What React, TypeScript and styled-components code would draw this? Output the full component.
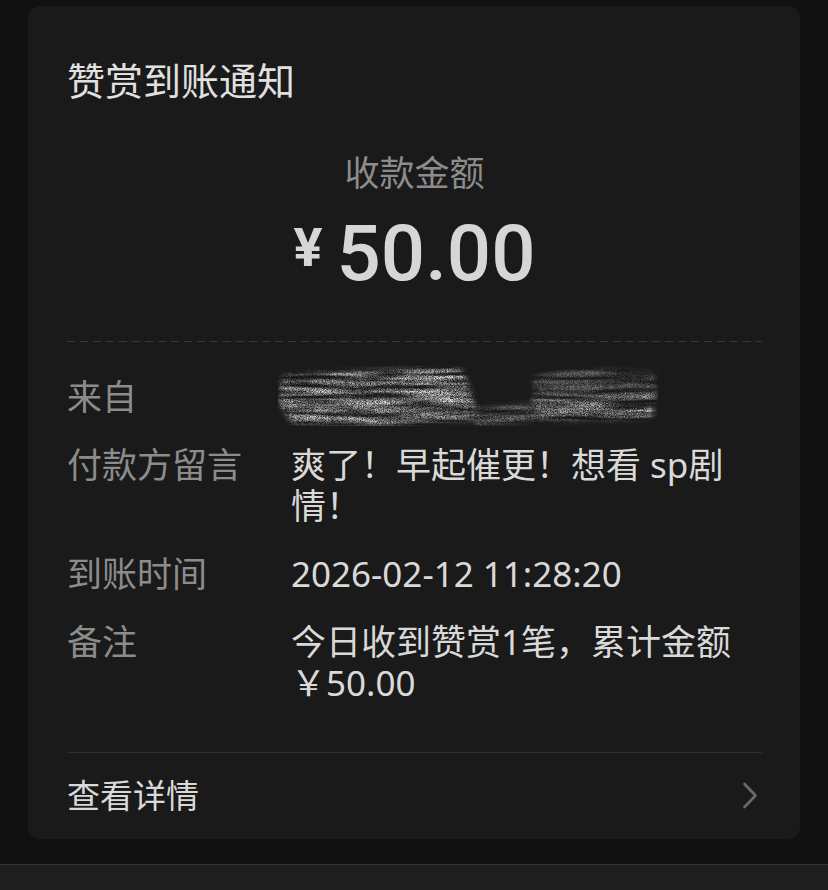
import React from 'react'
import styled, { createGlobalStyle } from 'styled-components'

const PAGE_BG = '#111111'
const CARD_BG = '#1a1a1a'
const TEXT = '#d9d9d9'
const MUTED = '#8c8c8c'
const FONT = `"Noto Sans", "Noto Sans CJK SC", sans-serif`

const GlobalStyle = createGlobalStyle`
  html, body {
    margin: 0;
    padding: 0;
    background: ${PAGE_BG};
    font-family: ${FONT};
  }
`

interface Row {
  label: string
  value?: string
  hidden?: boolean
}

const rows: Row[] = [
  { label: '来自', hidden: true },
  { label: '付款方留言', value: '爽了！早起催更！想看 sp剧情！' },
  { label: '到账时间', value: '2026-02-12 11:28:20' },
  { label: '备注', value: '今日收到赞赏1笔，累计金额￥50.00' },
]

// scribbled-out sender name
const Redaction = () => (
  <RedactionSvg width="392" height="74" viewBox="0 0 392 74">
    <defs>
      <filter id="grain" x="0" y="0" width="100%" height="100%">
        <feGaussianBlur in="SourceGraphic" stdDeviation="2.5" result="shape" />
        <feTurbulence type="fractalNoise" baseFrequency="0.015 0.22" numOctaves="2" seed="4" result="streak" />
        <feTurbulence type="fractalNoise" baseFrequency="1.4" numOctaves="1" seed="9" result="speck" />
        <feComposite in="streak" in2="speck" operator="arithmetic" k1="2.2" k2="0" k3="0" k4="0" result="mix" />
        <feColorMatrix
          in="mix"
          type="matrix"
          values="0 0 0 0 0.75  0 0 0 0 0.75  0 0 0 0 0.75  2.6 0 0 0 -0.35"
          result="tex"
        />
        <feComposite in="tex" in2="shape" operator="in" />
      </filter>
    </defs>
    <g filter="url(#grain)">
      <path d="M10 16 L188 8 L200 34 L206 62 L120 68 L20 66 L6 44 Z" fill="#fff" />
      <path d="M50 20 L180 16 L184 56 L60 60 Z" fill="#fff" />
      <path d="M200 50 L258 46 L262 64 L204 68 Z" fill="#fff" opacity="0.6" />
      <path d="M262 18 L320 10 L382 14 L386 38 L378 60 L300 64 L258 60 Z" fill="#fff" opacity="0.5" />
      <path d="M262 44 L380 38 L382 60 L266 62 Z" fill="#fff" />
    </g>
  </RedactionSvg>
)

const Chevron = () => (
  <svg width="16" height="27" viewBox="0 0 16 27">
    <polyline
      points="2.5,2 13.5,13.5 2.5,25"
      fill="none"
      stroke="#6a6a6a"
      strokeWidth="2.6"
      strokeLinecap="round"
      strokeLinejoin="round"
    />
  </svg>
)

export default function App() {
  return (
    <Page>
      <GlobalStyle />
      <Card>
        <Title>赞赏到账通知</Title>
        <AmountLabel>收款金额</AmountLabel>
        <Amount>
          <Yen>¥</Yen>
          <Digits>50.00</Digits>
        </Amount>
        <DashedRule />
        <Rows>
          {rows.map((r) => (
            <InfoRow key={r.label}>
              <Label>{r.label}</Label>
              <Value>{r.hidden ? <Redaction /> : r.value}</Value>
            </InfoRow>
          ))}
        </Rows>
        <SolidRule />
        <DetailLink>
          <span>查看详情</span>
          <Chevron />
        </DetailLink>
      </Card>
      <BottomBar />
    </Page>
  )
}

const Page = styled.div`
  min-height: 100vh;
  display: flex;
  flex-direction: column;
`

const Card = styled.div`
  margin: 6px 28px 0;
  padding: 52px 38px 0 39px;
  background: ${CARD_BG};
  border-radius: 12px;
  display: flex;
  flex-direction: column;
`

const Title = styled.div`
  font-size: 38px;
  line-height: 44px;
  color: #e0e0e0;
`

const AmountLabel = styled.div`
  margin-top: 51px;
  text-align: center;
  font-size: 35px;
  line-height: 40px;
  color: ${MUTED};
`

const Amount = styled.div`
  margin-top: 16px;
  height: 90px;
  display: flex;
  justify-content: center;
  align-items: center;
  gap: 14px;
  color: #d6d6d6;
  font-family: Roboto, "Noto Sans", sans-serif;
  font-weight: 500;
`

const Yen = styled.span`
  font-size: 54px;
  font-weight: 700;
  margin-top: -14px;
`

const Digits = styled.span`
  font-size: 78px;
  line-height: 90px;
`

const DashedRule = styled.div`
  margin-top: 42px;
  height: 1px;
  background: repeating-linear-gradient(
    90deg,
    #3a3a3a 0 8px,
    transparent 8px 13px
  );
`

const Rows = styled.div`
  margin-top: 34px;
  display: flex;
  flex-direction: column;
  gap: 27px;
`

const InfoRow = styled.div`
  display: grid;
  grid-template-columns: 224px 1fr;
  font-size: 35px;
  line-height: 41px;
`

const Label = styled.div`
  color: ${MUTED};
`

const Value = styled.div`
  color: ${TEXT};
  position: relative;
  min-height: 41px;
`

const RedactionSvg = styled.svg`
  position: absolute;
  left: -19px;
  top: -18px;
`

const SolidRule = styled.div`
  margin-top: 49px;
  height: 1px;
  background: #2e2e2e;
`

const DetailLink = styled.div`
  display: flex;
  justify-content: space-between;
  align-items: center;
  padding: 22px 4px 23px 0;
  font-size: 33px;
  line-height: 41px;
  color: ${TEXT};
`

const BottomBar = styled.div`
  margin-top: 25px;
  flex: 1;
  background: #1e1e1e;
  border-top: 1px solid #333333;
`
